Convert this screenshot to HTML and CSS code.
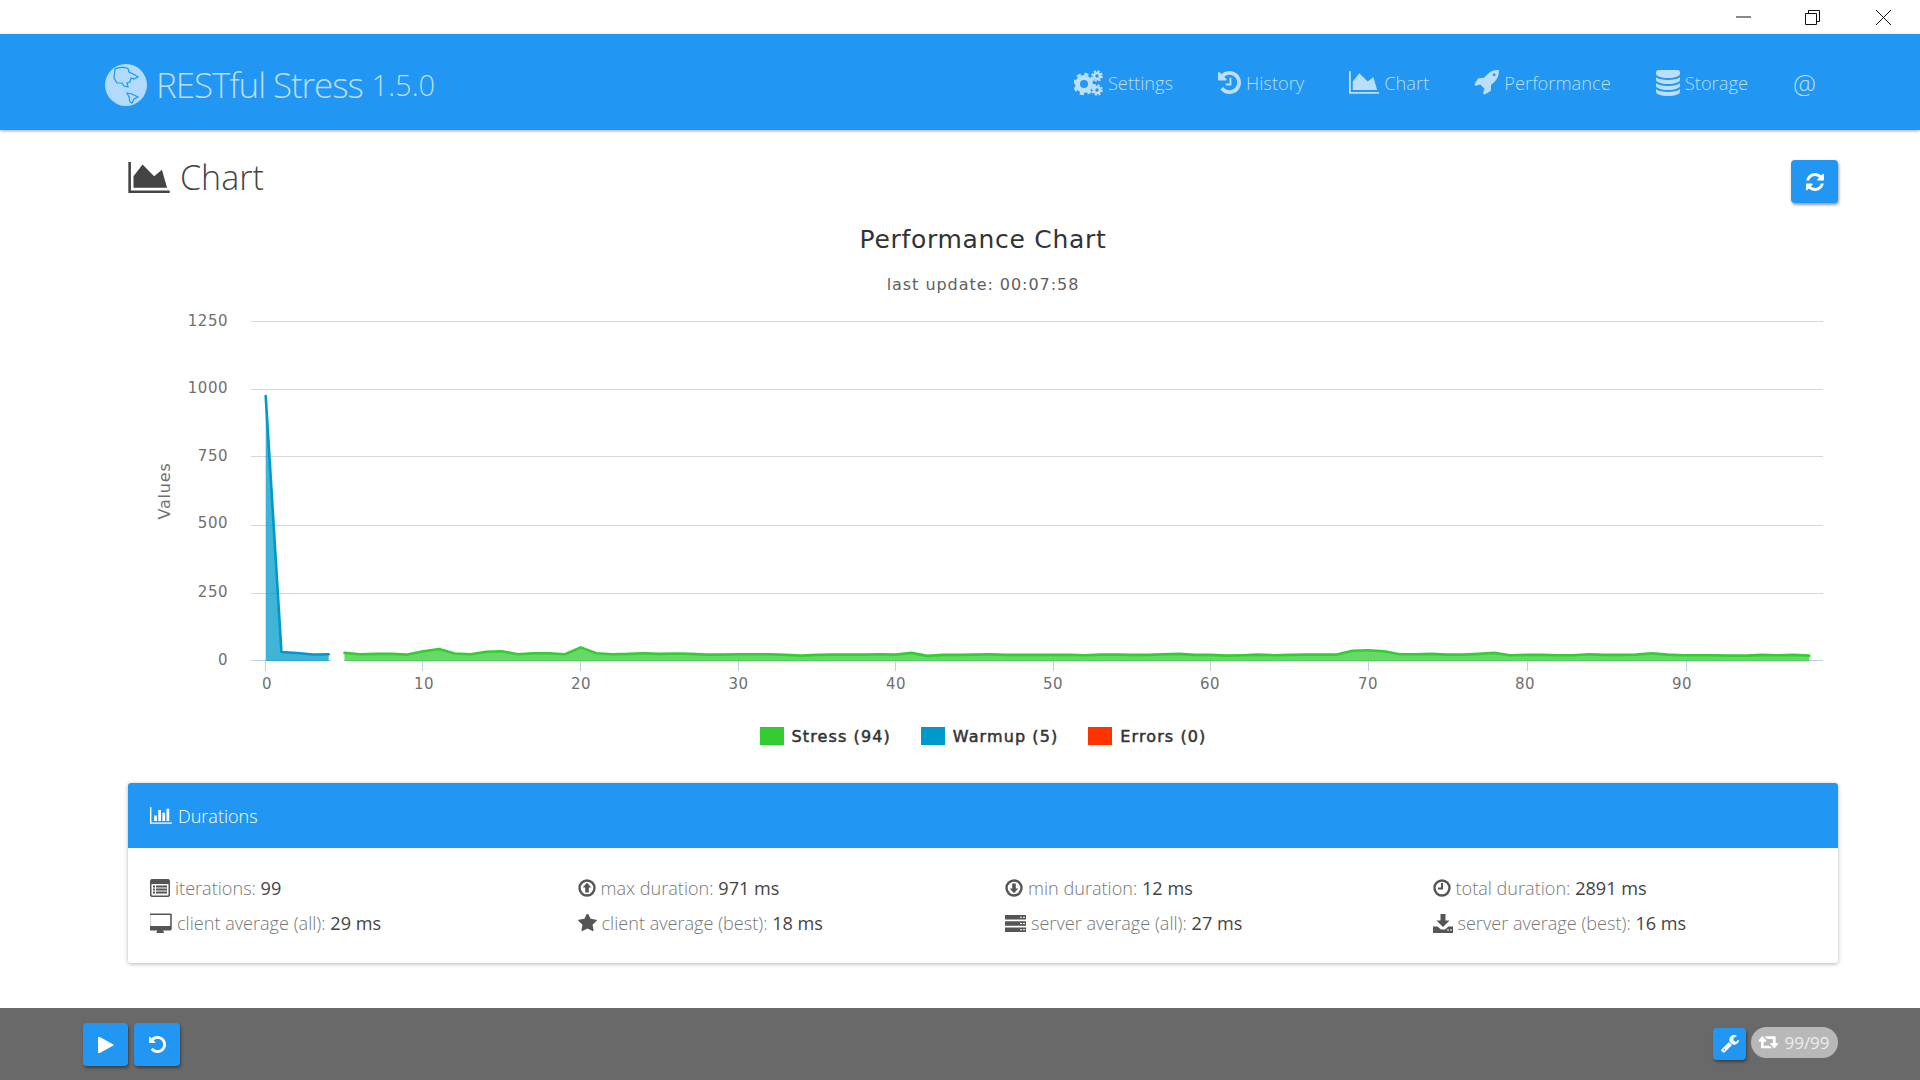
FILE: index.html
```html
<!DOCTYPE html>
<html lang="en">

<head>
  <meta charset="UTF-8" />
  <title>RESTful Stress</title>
  <link rel="stylesheet" href="styles.css">
</head>

<body>
  <div class="titlebar">
    <span class="win-btn">
      <svg width="15" height="15" viewBox="0 0 15 15"><path d="M0 7h15" /></svg>
    </span>
    <span class="win-btn">
      <svg width="15" height="15" viewBox="0 0 15 15"><path d="M.5 3.5h11v11H.5zM3.5 3.5V.5h11v11h-3" /></svg>
    </span>
    <span class="win-btn win-close">
      <svg width="15" height="15" viewBox="0 0 15 15"><path d="M0 0l15 15M15 0L0 15" /></svg>
    </span>
  </div>

  <header class="topbar">
    <div class="brand">
      <svg class="globe" width="42" height="42" viewBox="0 0 42 42">
        <circle cx="21" cy="21" r="21" fill="#b1dafd" />
        <path class="coast" d="M10 5C14 3 20 3 23 4.5L24 8 30 11 33 13 29 15 26 14 25 18 22 19 23 23 19 22 17 19 12 19 9 14z" />
        <path class="coast" d="M22 29L27 30 33 33 29 35 27 39 25 38 24 33z" />
      </svg>
      <span class="brand-name">RESTful Stress</span>
      <span class="brand-version">1.5.0</span>
    </div>
    <nav class="nav">
      <a class="nav-item">
        <svg class="icon" width="29" height="26" viewBox="0 0 29 26">
          <circle class="gear" cx="10" cy="14" r="6.5" stroke-width="5" />
          <circle class="gear-teeth" cx="10" cy="14" r="9.5" stroke-width="3.4" stroke-dasharray="4 3.46" />
          <circle class="gear" cx="23" cy="6" r="3" stroke-width="2.6" />
          <circle class="gear-teeth" cx="23" cy="6" r="4.8" stroke-width="2" stroke-dasharray="2.2 1.57" />
          <circle class="gear" cx="23" cy="20" r="3" stroke-width="2.6" />
          <circle class="gear-teeth" cx="23" cy="20" r="4.8" stroke-width="2" stroke-dasharray="2.2 1.57" />
        </svg>
        Settings
      </a>
      <a class="nav-item">
        <svg class="icon" width="23" height="23" viewBox="128 128 1536 1536">
          <path d="M1664 896q0 156-61 298t-164 245-245 164-298 61q-172 0-327-72.5t-264-204.5q-7-10-6.5-22.5t8.5-20.5l137-138q10-9 25-9 16 2 23 12 73 95 179 147t225 52q104 0 198.5-40.5t163.5-109.5 109.5-163.5 40.5-198.5-40.5-198.5-109.5-163.5-163.5-109.5-198.5-40.5q-98 0-188 35.5t-160 101.5l137 138q31 30 14 69-17 40-59 40h-448q-26 0-45-19t-19-45v-448q0-42 40-59 39-17 69 14l130 129q107-101 244.5-156.5t284.5-55.5q156 0 298 61t245 164 164 245 61 298zm-640-288v448q0 14-9 23t-23 9h-320q-14 0-23-9t-9-23v-64q0-14 9-23t23-9h224v-352q0-14 9-23t23-9h64q14 0 23 9t9 23z" />
        </svg>
        History
      </a>
      <a class="nav-item">
        <svg class="icon" width="30" height="23" viewBox="0 128 2048 1536">
          <path d="M2048 1536v128h-2048v-1536h128v1408h1920zm-384-1024l256 896h-1664v-576l448-576 576 576z" />
        </svg>
        Chart
      </a>
      <a class="nav-item">
        <svg class="icon" width="25" height="25" viewBox="64 128 1664 1664">
          <path d="M1504 448q0-40-28-68t-68-28-68 28-28 68 28 68 68 28 68-28 28-68zm224-288q0 249-75.5 430.5t-253.5 360.5q-81 80-195 176l-20 379q-2 16-16 26l-384 224q-7 4-16 4-12 0-23-9l-64-64q-13-14-8-32l85-276-281-281-276 85q-3 1-9 1-14 0-23-9l-64-64q-17-19-5-39l224-384q10-14 26-16l379-20q96-114 176-195 188-187 358-258t431-71q14 0 24 9.5t10 22.5z" />
        </svg>
        Performance
      </a>
      <a class="nav-item">
        <svg class="icon" width="24" height="26" viewBox="128 128 1536 1664">
          <path d="M896 768q237 0 443-43t325-127v170q0 69-103 128t-280 93.5-385 34.5-385-34.5-280-93.5-103-128v-170q119 84 325 127t443 43zm0 768q237 0 443-43t325-127v170q0 69-103 128t-280 93.5-385 34.5-385-34.5-280-93.5-103-128v-170q119 84 325 127t443 43zm0-384q237 0 443-43t325-127v170q0 69-103 128t-280 93.5-385 34.5-385-34.5-280-93.5-103-128v-170q119 84 325 127t443 43zm0-1152q208 0 385 34.5t280 93.5 103 128v128q0 69-103 128t-280 93.5-385 34.5-385-34.5-280-93.5-103-128v-128q0-69 103-128t280-93.5 385-34.5z" />
        </svg>
        Storage
      </a>
      <a class="nav-item nav-at">@</a>
    </nav>
  </header>

  <main class="content">
    <div class="page-head">
      <h1 class="page-title">
        <svg width="42" height="31" viewBox="0 128 2048 1536">
          <path d="M2048 1536v128h-2048v-1536h128v1408h1920zm-384-1024l256 896h-1664v-576l448-576 576 576z" />
        </svg>
        <span class="page-title-text">Chart</span>
      </h1>
      <button class="btn btn-refresh">
        <svg width="18" height="18" viewBox="128 128 1536 1536">
          <path d="M1639 1056q0 5-1 7-64 268-268 434.5t-478 166.5q-146 0-282.5-55t-243.5-157l-129 129q-19 19-45 19t-45-19-19-45v-448q0-26 19-45t45-19h448q26 0 45 19t19 45-19 45l-137 137q71 66 161 102t187 36q134 0 250-65t186-179q11-17 53-117 8-23 30-23h192q13 0 22.5 9.5t9.5 22.5zm25-800v448q0 26-19 45t-45 19h-448q-26 0-45-19t-19-45 19-45l138-138q-148-137-349-137-134 0-250 65t-186 179q-11 17-53 117-8 23-30 23h-199q-13 0-22.5-9.5t-9.5-22.5v-7q65-268 270-434.5t480-166.5q146 0 284 55.5t245 156.5l130-129q19-19 45-19t45 19 19 45z" />
        </svg>
      </button>
    </div>

    <section class="chart">
      <div class="chart-title">Performance Chart</div>
      <div class="chart-subtitle">last update: 00:07:58</div>

      <svg class="plot" width="1710" height="400" viewBox="128 300 1710 400">
        <g class="grid">
          <path d="M251 321.5H1823M251 389.5H1823M251 456.5H1823M251 525.5H1823M251 593.5H1823" />
        </g>
        <path class="axis" d="M251 660.5H1823M265.5 661v10M422.5 661v10M580.5 661v10M738.5 661v10M895.5 661v10M1053.5 661v10M1210.5 661v10M1368.5 661v10M1527.5 661v10M1686.5 661v10" />

        <g transform="translate(265.7 661) scale(15.75 -1)">
          <polygon class="fill-warmup" points="0,0 0,265 1,9 2,8 3,6.5 4,6.8 4,0" />
          <polyline class="line-warmup" points="0,265 1,9 2,8 3,6.5 4,6.8" />
          <polygon class="fill-stress" points="5,0 5,8.1 6,6.8 7,7.1 8,7.1 9,6.4 10,9.8 11,11.9 12,7.5 13,6.8 14,9.2 15,9.8 16,6.8 17,7.8 18,7.8 19,6.8 20,13.6 21,7.8 22,6.8 23,7.1 24,7.8 25,7.1 26,7.5 27,7.1 28,6.4 29,6.4 30,6.8 31,6.8 32,6.8 33,6.1 34,5.4 35,6.1 36,6.4 37,6.4 38,6.4 39,6.8 40,6.4 41,8.1 42,5.1 43,6.1 44,6.1 45,6.4 46,6.8 47,6.1 48,6.1 49,6.1 50,6.1 51,6.1 52,5.8 53,6.4 54,6.4 55,6.1 56,6.1 57,6.8 58,7.1 59,6.1 60,6.1 61,5.4 62,5.8 63,6.4 64,5.8 65,6.1 66,6.4 67,6.4 68,6.4 69,10.2 70,10.8 71,9.8 72,6.8 73,6.8 74,7.1 75,6.4 76,6.4 77,7.1 78,8.1 79,5.8 80,6.1 81,6.1 82,5.8 83,5.8 84,6.8 85,6.1 86,6.1 87,6.4 88,7.8 89,6.4 90,5.8 91,5.8 92,5.8 93,5.4 94,5.4 95,6.1 96,5.8 97,6.1 98,5.4 98,0" />
          <polyline class="line-stress" points="5,8.1 6,6.8 7,7.1 8,7.1 9,6.4 10,9.8 11,11.9 12,7.5 13,6.8 14,9.2 15,9.8 16,6.8 17,7.8 18,7.8 19,6.8 20,13.6 21,7.8 22,6.8 23,7.1 24,7.8 25,7.1 26,7.5 27,7.1 28,6.4 29,6.4 30,6.8 31,6.8 32,6.8 33,6.1 34,5.4 35,6.1 36,6.4 37,6.4 38,6.4 39,6.8 40,6.4 41,8.1 42,5.1 43,6.1 44,6.1 45,6.4 46,6.8 47,6.1 48,6.1 49,6.1 50,6.1 51,6.1 52,5.8 53,6.4 54,6.4 55,6.1 56,6.1 57,6.8 58,7.1 59,6.1 60,6.1 61,5.4 62,5.8 63,6.4 64,5.8 65,6.1 66,6.4 67,6.4 68,6.4 69,10.2 70,10.8 71,9.8 72,6.8 73,6.8 74,7.1 75,6.4 76,6.4 77,7.1 78,8.1 79,5.8 80,6.1 81,6.1 82,5.8 83,5.8 84,6.8 85,6.1 86,6.1 87,6.4 88,7.8 89,6.4 90,5.8 91,5.8 92,5.8 93,5.4 94,5.4 95,6.1 96,5.8 97,6.1 98,5.4" />
          <rect class="gap" x="4.15" y="-1.5" width="0.8" height="8" />
        </g>

        <g class="y-labels">
          <text x="228" y="326">1250</text>
          <text x="228" y="393">1000</text>
          <text x="228" y="461">750</text>
          <text x="228" y="528">500</text>
          <text x="228" y="597">250</text>
          <text x="228" y="665">0</text>
        </g>
        <g class="x-labels">
          <text x="267" y="689">0</text>
          <text x="424" y="689">10</text>
          <text x="581" y="689">20</text>
          <text x="738.5" y="689">30</text>
          <text x="896" y="689">40</text>
          <text x="1053" y="689">50</text>
          <text x="1210" y="689">60</text>
          <text x="1368" y="689">70</text>
          <text x="1525" y="689">80</text>
          <text x="1682" y="689">90</text>
        </g>
        <text class="y-title" transform="translate(170 491) rotate(-90)">Values</text>
      </svg>

      <div class="legend">
        <span class="legend-item"><i class="swatch swatch-stress"></i>Stress (94)</span>
        <span class="legend-item"><i class="swatch swatch-warmup"></i>Warmup (5)</span>
        <span class="legend-item"><i class="swatch swatch-errors"></i>Errors (0)</span>
      </div>
    </section>

    <section class="card">
      <div class="card-head">
        <svg width="22" height="17" viewBox="0 128 2048 1536" fill="currentColor">
          <path d="M640 896v512h-256v-512h256zm384-512v1024h-256v-1024h256zm1024 1152v128h-2048v-1536h128v1408h1920zm-640-896v768h-256v-768h256zm384-384v1152h-256v-1152h256z" />
        </svg>
        Durations
      </div>
      <div class="card-body">
        <div class="stat">
          <svg width="20" height="18" viewBox="0 0 20 18"><path fill-rule="evenodd" d="M2 0h16a2 2 0 0 1 2 2v14a2 2 0 0 1-2 2H2a2 2 0 0 1-2-2V2a2 2 0 0 1 2-2zM1.5 5v10.5a1 1 0 0 0 1 1h15a1 1 0 0 0 1-1V5zM3 6.5h2v2H3zM6 6.5h11v2H6zM3 9.5h2v2H3zM6 9.5h11v2H6zM3 12.5h2v2H3zM6 12.5h11v2H6z" /></svg>
          <span>iterations: <b>99</b></span>
        </div>
        <div class="stat">
          <svg width="18" height="18" viewBox="0 0 18 18"><circle class="ring" cx="9" cy="9" r="7.5" /><path d="M9 3.8L13.3 8.5 10.8 8.5 10.8 13.5 7.2 13.5 7.2 8.5 4.7 8.5z" /></svg>
          <span>max duration: <b>971 ms</b></span>
        </div>
        <div class="stat">
          <svg width="18" height="18" viewBox="0 0 18 18"><circle class="ring" cx="9" cy="9" r="7.5" /><path d="M9 14.2L13.3 9.5 10.8 9.5 10.8 4.5 7.2 4.5 7.2 9.5 4.7 9.5z" /></svg>
          <span>min duration: <b>12 ms</b></span>
        </div>
        <div class="stat">
          <svg width="18" height="18" viewBox="0 0 18 18"><circle class="ring" cx="9" cy="9" r="7.5" /><path d="M8 4h2v6.5H5v-2h3z" /></svg>
          <span>total duration: <b>2891 ms</b></span>
        </div>
        <div class="stat">
          <svg width="22" height="20" viewBox="0 0 1792 1664"><path d="M1664 1040v-832q0-13-9.5-22.5t-22.5-9.5h-1600q-13 0-22.5 9.5t-9.5 22.5v832q0 13 9.5 22.5t22.5 9.5h1600q13 0 22.5-9.5t9.5-22.5zm128-832v1088q0 66-47 113t-113 47h-544q0 37 16 77.5t32 71 16 43.5q0 26-19 45t-45 19h-512q-26 0-45-19t-19-45q0-14 16-44t32-70 16-78h-544q-66 0-113-47t-47-113v-1088q0-66 47-113t113-47h1632q66 0 113 47t47 113z" /></svg>
          <span>client average (all): <b>29 ms</b></span>
        </div>
        <div class="stat">
          <svg width="19" height="18" viewBox="0 128 1664 1536"><path d="M1664 647q0 22-26 48l-363 354 86 500q1 7 1 20 0 21-10.5 35.5t-30.5 14.5q-19 0-40-12l-449-236-449 236q-22 12-40 12-21 0-31.5-14.5t-10.5-35.5q0-6 2-20l86-500-364-354q-25-27-25-48 0-37 56-46l502-73 225-455q19-41 49-41t49 41l225 455 502 73q56 9 56 46z" /></svg>
          <span>client average (best): <b>18 ms</b></span>
        </div>
        <div class="stat">
          <svg width="21" height="17" viewBox="0 0 21 17"><path fill-rule="evenodd" d="M0 0h21v4.4H0zM0 6.3h21v4.4H0zM0 12.6h21v4.4H0zM15 1.7v1h2v-1zM18 1.7v1h2v-1zM15 8v1h2V8zM18 8v1h2V8zM15 14.3v1h2v-1zM18 14.3v1h2v-1z" /></svg>
          <span>server average (all): <b>27 ms</b></span>
        </div>
        <div class="stat">
          <svg width="20" height="19" viewBox="0 0 20 19"><path fill-rule="evenodd" d="M7.5 0h5v6.5h4L10 13 3.5 6.5h4zM0 12.5h4.5L8 15.5h4l3.5-3H20V19H0zM14 15.5v1h2v-1zM17 15.5v1h2v-1z" /></svg>
          <span>server average (best): <b>16 ms</b></span>
        </div>
      </div>
    </section>
  </main>

  <footer class="footer">
    <div class="footer-left">
      <button class="btn btn-play">
        <svg width="16" height="16" viewBox="192 192 1408 1408"><path d="M1576 927l-1328 738q-23 13-39.5 3t-16.5-36v-1472q0-26 16.5-36t39.5 3l1328 738q23 13 23 31t-23 31z" /></svg>
      </button>
      <button class="btn btn-undo">
        <svg width="17" height="17" viewBox="128 128 1536 1536"><path d="M1664 896q0 156-61 298t-164 245-245 164-298 61q-172 0-327-72.5t-264-204.5q-7-10-6.5-22.5t8.5-20.5l137-138q10-9 25-9 16 2 23 12 73 95 179 147t225 52q104 0 198.5-40.5t163.5-109.5 109.5-163.5 40.5-198.5-40.5-198.5-109.5-163.5-163.5-109.5-198.5-40.5q-98 0-188 35.5t-160 101.5l137 138q31 30 14 69-17 40-59 40h-448q-26 0-45-19t-19-45v-448q0-42 40-59 39-17 69 14l130 129q107-101 244.5-156.5t284.5-55.5q156 0 298 61t245 164 164 245 61 298z" /></svg>
      </button>
    </div>
    <div class="footer-right">
      <button class="btn btn-tool">
        <svg width="18" height="18" viewBox="64 128 1664 1664"><path d="M448 1472q0-26-19-45t-45-19-45 19-19 45 19 45 45 19 45-19 19-45zm644-420l-682 682q-37 37-90 37-52 0-91-37l-106-108q-38-36-38-90 0-53 38-91l681-681q39 98 114.5 173.5t173.5 114.5zm634-435q0 39-23 106-47 134-164.5 217.5t-258.5 83.5q-185 0-316.5-131.5t-131.5-316.5 131.5-316.5 316.5-131.5q58 0 121.5 16.5t107.5 46.5q16 11 16 28t-16 28l-293 169v224l193 107q5-3 79-48.5t135.5-81 70.5-35.5q15 0 23.5 10t8.5 25z" /></svg>
      </button>
      <span class="badge">
        <svg width="20" height="14" viewBox="0 256 1920 1280"><path d="M1216 1376q0 13-9.5 22.5t-22.5 9.5h-960q-8 0-13.5-2t-9-7-5.5-8-3-11.5-1-11.5v-600h-192q-26 0-45-19t-19-45q0-24 15-41l320-384q19-22 49-22t49 22l320 384q15 17 15 41 0 26-19 45t-45 19h-192v384h576q16 0 25 11l160 192q7 10 7 21zm640-416q0 24-15 41l-320 384q-20 23-49 23t-49-23l-320-384q-15-17-15-41 0-26 19-45t45-19h192v-384h-576q-16 0-25-12l-160-192q-7-9-7-20 0-13 9.5-22.5t22.5-9.5h960q8 0 13.5 2t9 7 5.5 8 3 11.5 1 11.5v600h192q26 0 45 19t19 45z" /></svg>
        99/99
      </span>
    </div>
  </footer>
</body>

</html>
```

FILE: styles.css
```css
* {
  box-sizing: border-box;
}

body {
  margin: 0;
  height: 1080px;
  overflow: hidden;
  display: flex;
  flex-direction: column;
  font-family: "Open Sans", sans-serif;
  font-weight: 300;
  background: #fff;
  color: #444;
}

/* window controls */
.titlebar {
  height: 34px;
  display: flex;
  justify-content: flex-end;
}

.win-btn {
  width: 69px;
  display: flex;
  align-items: center;
  justify-content: center;
}

.win-close {
  width: 73px;
}

.win-btn svg {
  fill: none;
  stroke: #111;
  stroke-width: 1;
}

/* top bar */
.topbar {
  height: 96px;
  flex: none;
  display: flex;
  align-items: center;
  justify-content: space-between;
  padding: 0 104px 0 105px;
  background: #2196f3;
  box-shadow: 0 1px 3px rgba(0, 0, 0, 0.35);
  color: #bbdefb;
  position: relative;
}

.brand {
  display: flex;
  align-items: center;
  gap: 9px;
  margin-top: 5px;
}

.globe .coast {
  fill: none;
  stroke: #2196f3;
  stroke-width: 1.2;
}

.brand-name {
  font-size: 35px;
  font-weight: 300;
  letter-spacing: -1.1px;
}

.brand-version {
  font-size: 29px;
  font-weight: 300;
}

.nav {
  display: flex;
  align-items: center;
  gap: 45px;
  margin-top: 1px;
}

.nav-item {
  display: flex;
  align-items: center;
  gap: 5px;
  font-size: 18.3px;
}

.nav-at {
  font-size: 26px;
}

.icon {
  fill: currentColor;
}

.gear,
.gear-teeth {
  fill: none;
  stroke: currentColor;
}

/* page */
.content {
  flex: 1;
  padding: 30px 82px 0 128px;
}

.page-head {
  display: flex;
  align-items: flex-start;
  justify-content: space-between;
  height: 43px;
}

.page-title {
  margin: -1px 0 0;
  display: flex;
  align-items: center;
  gap: 10px;
  font-size: 34px;
  font-weight: 300;
  line-height: 38px;
  color: #444;
}

.page-title-text {
  margin-top: -1px;
}

.page-title svg {
  fill: #444;
}

.btn {
  border: none;
  padding: 0;
  display: flex;
  align-items: center;
  justify-content: center;
  background: #2196f3;
  border-radius: 4px;
  box-shadow: 1px 2px 3px rgba(0, 0, 0, 0.4);
}

.btn svg {
  fill: #fff;
}

.btn-refresh {
  width: 47px;
  height: 43px;
}

/* chart */
.chart {
  font-family: "DejaVu Sans", sans-serif;
  font-weight: 400;
}

.chart-title {
  margin-top: 21px;
  text-align: center;
  font-size: 25px;
  line-height: 32px;
  letter-spacing: 0.7px;
  color: #333;
}

.chart-subtitle {
  margin-top: 17px;
  margin-bottom: 3px;
  text-align: center;
  font-size: 16px;
  line-height: 24px;
  letter-spacing: 0.95px;
  color: #606060;
}

.plot {
  display: block;
}

.grid path {
  fill: none;
  stroke: #d8d8d8;
  stroke-width: 1;
}

.axis {
  fill: none;
  stroke: #c0d0e0;
  stroke-width: 1;
}

.fill-warmup {
  fill: #0099cc;
  fill-opacity: 0.75;
}

.fill-stress {
  fill: #33cc33;
  fill-opacity: 0.75;
}

.line-warmup,
.line-stress {
  fill: none;
  stroke-width: 2.6;
  vector-effect: non-scaling-stroke;
  stroke-linecap: round;
  stroke-linejoin: round;
}

.line-warmup {
  stroke: #0099cc;
}

.line-stress {
  stroke: #33cc33;
}

.gap {
  fill: #fff;
}

.y-labels text,
.x-labels text {
  font-size: 15px;
  letter-spacing: 0.5px;
  fill: #707070;
}

.y-labels text {
  text-anchor: end;
}

.x-labels text {
  text-anchor: middle;
}

.y-title {
  font-size: 16px;
  letter-spacing: 0.8px;
  text-anchor: middle;
  fill: #707070;
}

.legend {
  display: flex;
  justify-content: center;
  gap: 30px;
  margin-top: 24px;
  height: 24px;
  align-items: center;
  font-size: 16px;
  letter-spacing: 1.1px;
  -webkit-text-stroke: 0.5px #333;
  color: #333;
}

.legend-item {
  display: flex;
  align-items: center;
  gap: 8px;
}

.swatch {
  width: 24px;
  height: 18px;
}

.swatch-stress {
  background: #33cc33;
}

.swatch-warmup {
  background: #0099cc;
}

.swatch-errors {
  background: #ff3300;
}

/* durations card */
.card {
  margin-top: 35px;
  height: 180px;
  border-radius: 3px;
  box-shadow: 0 1px 4px rgba(0, 0, 0, 0.3);
  overflow: hidden;
}

.card-head {
  height: 65px;
  display: flex;
  align-items: center;
  gap: 6px;
  padding-left: 22px;
  background: #2196f3;
  color: #fff;
  font-size: 18px;
}

.card-body {
  display: grid;
  grid-template-columns: repeat(4, 1fr);
  grid-auto-rows: 35.5px;
  padding-top: 22px;
}

.stat {
  display: flex;
  align-items: center;
  padding-left: 22px;
  font-size: 18.1px;
  color: #777;
}

.stat svg {
  fill: #555;
  margin-right: 5px;
  flex: none;
}

.stat .ring {
  fill: none;
  stroke: #555;
  stroke-width: 2.4;
}

.stat b {
  font-weight: 400;
  color: #444;
}

/* bottom bar */
.footer {
  height: 72px;
  flex: none;
  display: flex;
  justify-content: space-between;
  padding: 0 82px 0 83px;
  background: #696969;
}

.footer-left {
  display: flex;
  gap: 6px;
  padding-top: 15px;
}

.btn-play,
.btn-undo {
  height: 43px;
}

.btn-play {
  width: 45px;
}

.btn-undo {
  width: 46px;
}

.footer-right {
  display: flex;
  gap: 5px;
  padding-top: 19px;
}

.btn-tool {
  width: 33px;
  height: 32px;
  margin-top: 1px;
}

.badge {
  display: flex;
  align-items: center;
  justify-content: center;
  gap: 5px;
  width: 87px;
  height: 31px;
  border-radius: 16px;
  background: #b8b8b8;
  color: #eee;
  font-size: 17px;
  font-weight: 400;
}

.badge svg {
  fill: #fff;
}
```
